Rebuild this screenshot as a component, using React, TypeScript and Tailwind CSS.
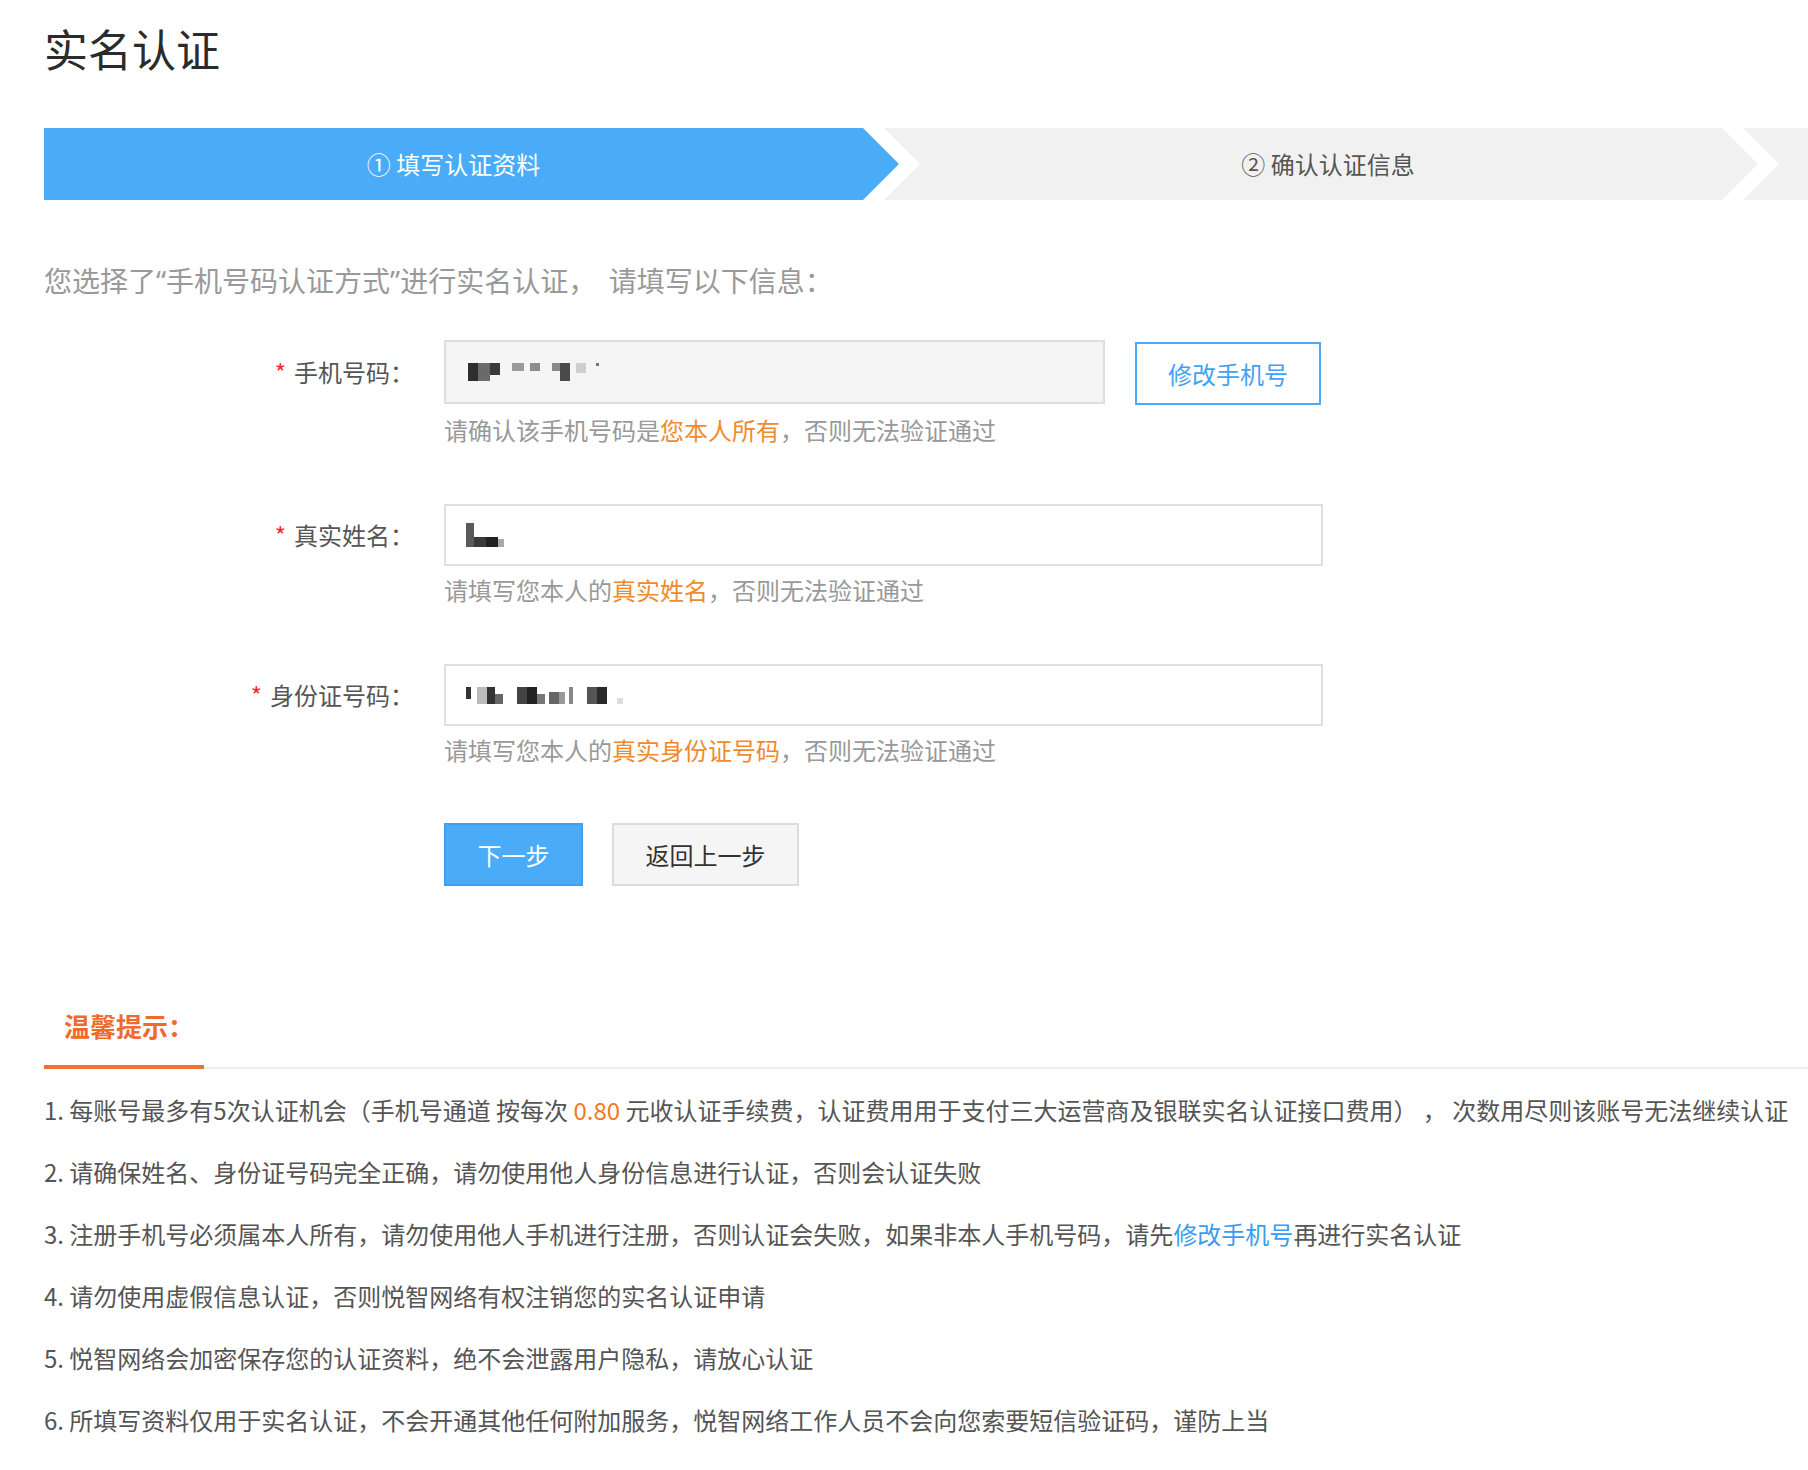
const FONT = "font-['Noto_Sans_CJK_SC',sans-serif]"
const QUOTE = "font-['Noto_Sans',sans-serif]"

const TIPS: React.ReactNode[] = [
  <>
    1. 每账号最多有5次认证机会（手机号通道 按每次&nbsp; <span className="text-[#f5781e]">0.80</span> &nbsp;元收认证手续费，认证费用用于支付三大运营商及银联实名认证接口费用）&nbsp;，&nbsp;次数用尽则该账号无法继续认证
  </>,
  <>2. 请确保姓名、身份证号码完全正确，请勿使用他人身份信息进行认证，否则会认证失败</>,
  <>
    3. 注册手机号必须属本人所有，请勿使用他人手机进行注册，否则认证会失败，如果非本人手机号码，请先
    <span className="text-[#3a9cf0]">修改手机号</span>再进行实名认证
  </>,
  <>4. 请勿使用虚假信息认证，否则悦智网络有权注销您的实名认证申请</>,
  <>5. 悦智网络会加密保存您的认证资料，绝不会泄露用户隐私，请放心认证</>,
  <>6. 所填写资料仅用于实名认证，不会开通其他任何附加服务，悦智网络工作人员不会向您索要短信验证码，谨防上当</>,
]

function Label({ text, height }: { text: string; height: string }) {
  return (
    <div className={`w-[370px] shrink-0 flex items-center justify-end text-[24px] text-[#555] ${height}`}>
      <span className="text-[#f02b2b] mr-[8px]">*</span>
      {text}
    </div>
  )
}

function Hint({ before, mark, after }: { before: string; mark: string; after: string }) {
  return (
    <div className="flex items-center text-[24px] text-[#999] h-full">
      {before}
      <span className="text-[#f08a2e]">{mark}</span>
      {after}
    </div>
  )
}

export default function App() {
  return (
    <div className={`min-h-screen bg-white text-[#333] ${FONT}`}>
      <div className="pl-[44px] pb-[40px]">
        {/* page title */}
        <div className="h-[96px] flex items-center text-[44px] leading-none text-[#2b2b2b]">实名认证</div>

        {/* steps */}
        <div className="mt-[32px] flex h-[72px] overflow-hidden text-[24px]">
          <div className="w-[855px] shrink-0 bg-[#4aabf9] text-white flex items-center justify-center pr-[36px] [clip-path:polygon(0_0,calc(100%_-_36px)_0,100%_50%,calc(100%_-_36px)_100%,0_100%)]">
            ① 填写认证资料
          </div>
          <div className="ml-[-15px] w-[874px] shrink-0 bg-[#f1f1f1] text-[#555] flex items-center justify-center pl-[50px] pr-[36px] [clip-path:polygon(0_0,calc(100%_-_36px)_0,100%_50%,calc(100%_-_36px)_100%,0_100%,36px_50%)]">
            ② 确认认证信息
          </div>
          <div className="ml-[-15px] flex-1 bg-[#f1f1f1] [clip-path:polygon(0_0,100%_0,100%_100%,0_100%,36px_50%)]" />
        </div>

        <div className="mt-[50px] h-[60px] flex items-center text-[28px] text-[#999] whitespace-pre">
          您选择了<span className={QUOTE}>“</span>手机号码认证方式<span className={QUOTE}>”</span>进行实名认证，  请填写以下信息：
        </div>

        {/* phone */}
        <div className="mt-[30px] flex">
          <Label text="手机号码：" height="h-[64px]" />
          <div className="ml-[30px]">
            <div className="flex items-start">
              <div className="w-[661px] h-[64px] border-2 border-[#dedede] bg-[#f5f5f5] flex items-center pl-[22px]">
                <div className="flex items-center h-[18px]">
                  <span className="w-[10px] h-[18px] bg-[#2e2e2e]" />
                  <span className="w-[12px] h-[18px] bg-[#6a6a6a]" />
                  <span className="w-[10px] h-[12px] self-start bg-[#3a3a3a]" />
                  <span className="w-[12px] h-[8px] ml-[12px] self-start bg-[#9a9a9a]" />
                  <span className="w-[10px] h-[8px] ml-[6px] self-start bg-[#8c8c8c]" />
                  <span className="w-[8px] h-[8px] ml-[12px] self-start bg-[#8a8a8a]" />
                  <span className="w-[10px] h-[18px] bg-[#4a4a4a]" />
                  <span className="w-[10px] h-[10px] ml-[6px] self-start bg-[#cfcfcf]" />
                  <span className="w-[3px] h-[3px] ml-[10px] self-start bg-[#777]" />
                </div>
              </div>
              <button className="ml-[30px] mt-[2px] w-[186px] h-[63px] border-2 border-[#4aabf9] bg-white text-[#3fa2f5] text-[24px]">
                修改手机号
              </button>
            </div>
            <div className="h-[50px]">
              <Hint before="请确认该手机号码是" mark="您本人所有" after="，否则无法验证通过" />
            </div>
          </div>
        </div>

        {/* name */}
        <div className="mt-[49px] flex">
          <Label text="真实姓名：" height="h-[62px]" />
          <div className="ml-[30px]">
            <div className="w-[879px] h-[62px] border-2 border-[#dedede] bg-white flex items-center pl-[20px]">
              <div className="flex items-end h-[24px]">
                <span className="w-[8px] h-[24px] bg-[#5a5a5a]" />
                <span className="w-[12px] h-[10px] bg-[#3a3a3a]" />
                <span className="w-[12px] h-[10px] bg-[#222]" />
                <span className="w-[6px] h-[8px] bg-[#aaa]" />
              </div>
            </div>
            <div className="h-[48px]">
              <Hint before="请填写您本人的" mark="真实姓名" after="，否则无法验证通过" />
            </div>
          </div>
        </div>

        {/* id number */}
        <div className="mt-[50px] flex">
          <Label text="身份证号码：" height="h-[62px]" />
          <div className="ml-[30px]">
            <div className="w-[879px] h-[62px] border-2 border-[#dedede] bg-white flex items-center pl-[20px]">
              <div className="flex items-center h-[17px]">
                <span className="w-[5px] h-[12px] self-start bg-[#333]" />
                <span className="w-[10px] h-[17px] ml-[6px] bg-[#bbb]" />
                <span className="w-[8px] h-[17px] bg-[#333]" />
                <span className="w-[8px] h-[10px] self-end bg-[#666]" />
                <span className="w-[10px] h-[17px] ml-[14px] bg-[#444]" />
                <span className="w-[10px] h-[17px] bg-[#222]" />
                <span className="w-[8px] h-[10px] self-end bg-[#777]" />
                <span className="w-[10px] h-[12px] ml-[4px] self-end bg-[#666]" />
                <span className="w-[6px] h-[12px] self-end bg-[#999]" />
                <span className="w-[4px] h-[17px] ml-[4px] bg-[#888]" />
                <span className="w-[10px] h-[17px] ml-[14px] bg-[#555]" />
                <span className="w-[10px] h-[17px] bg-[#2a2a2a]" />
                <span className="w-[6px] h-[6px] ml-[10px] self-end bg-[#ddd]" />
              </div>
            </div>
            <div className="h-[48px]">
              <Hint before="请填写您本人的" mark="真实身份证号码" after="，否则无法验证通过" />
            </div>
          </div>
        </div>

        {/* actions */}
        <div className="mt-[49px] pl-[400px] flex">
          <button className="w-[139px] h-[63px] bg-[#4aabf9] border-2 border-[#3f9ff0] text-white text-[24px]">下一步</button>
          <button className="ml-[29px] w-[187px] h-[63px] bg-[#f5f5f5] border-2 border-[#dcdcdc] text-[#333] text-[24px]">
            返回上一步
          </button>
        </div>

        {/* tips */}
        <div className="mt-[100px] border-b-2 border-[#eeeeee]">
          <div className="w-[160px] h-[83px] -mb-[2px] border-b-4 border-[#f07030] flex items-center pl-[20px] text-[26px] font-bold text-[#ef6b2c]">
            温馨提示：
          </div>
        </div>
        <div className="mt-[10px]">
          {TIPS.map((t, i) => (
            <div key={i} className="h-[62px] flex items-center text-[24px] text-[#555] whitespace-nowrap">
              {t}
            </div>
          ))}
        </div>
      </div>
    </div>
  )
}
